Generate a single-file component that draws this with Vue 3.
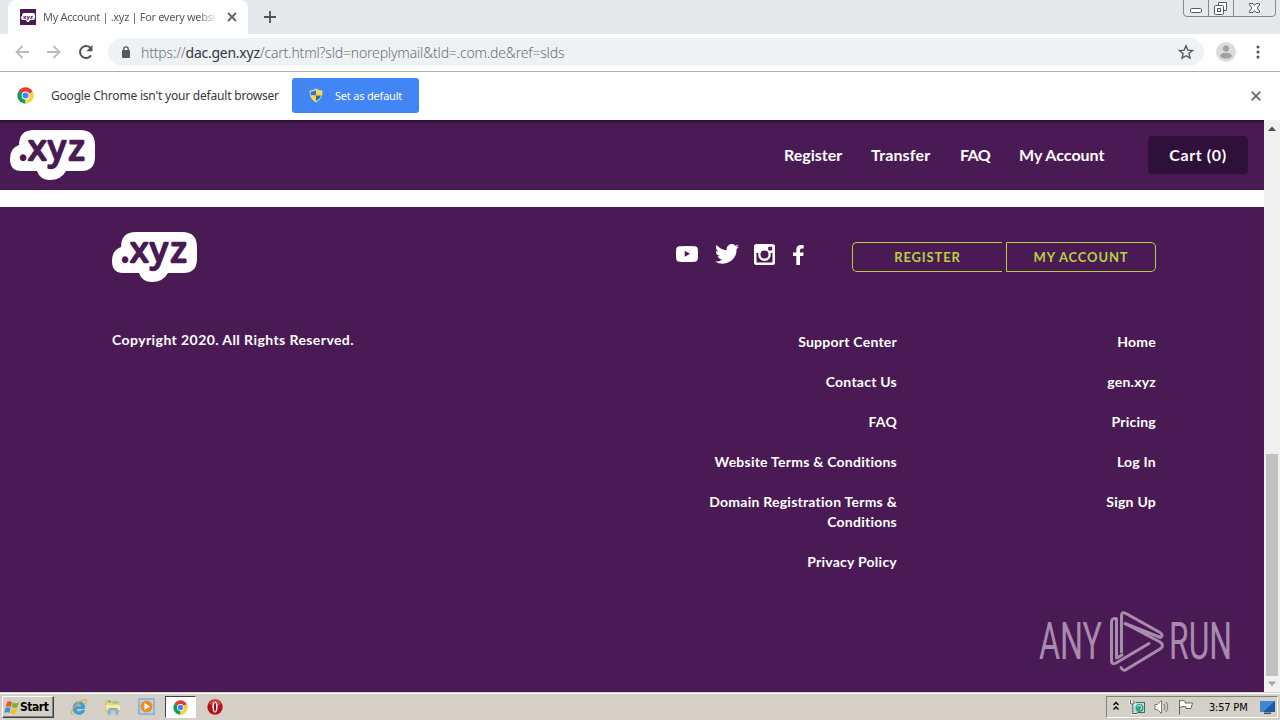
<script setup>
import { ref } from 'vue'

const navLinks = ref([
  { label: 'Register', cls: 'nav-register' },
  { label: 'Transfer', cls: 'nav-transfer' },
  { label: 'FAQ', cls: 'nav-faq' },
  { label: 'My Account', cls: 'nav-account' }
])

const supportLinks = ref([
  'Support Center',
  'Contact Us',
  'FAQ',
  'Website Terms & Conditions',
  'Domain Registration Terms & Conditions',
  'Privacy Policy'
])

const siteLinks = ref(['Home', 'gen.xyz', 'Pricing', 'Log In', 'Sign Up'])
</script>

<template>
  <div class="desktop">
    <!-- Shared symbols -->
    <svg class="defs" width="0" height="0">
      <symbol id="chrome" viewBox="0 0 48 48">
        <circle cx="24" cy="24" r="23" fill="#fff" />
        <path d="M24 24 4.1 12.5A23 23 0 0 1 43.9 12.5z" fill="#e33b2e" />
        <path d="M24 24 4.1 12.5A23 23 0 0 0 24 47z" fill="#109d58" />
        <path d="M24 24 43.9 12.5A23 23 0 0 1 24 47z" fill="#fccd48" />
        <path d="M24 13h20.2L24 24z" fill="#e33b2e" />
        <path d="M14.5 29.5 4.1 12.5 24 24z" fill="#109d58" />
        <path d="M33.5 29.5 24 47V24z" fill="#fccd48" />
        <circle cx="24" cy="24" r="11" fill="#fff" />
        <circle cx="24" cy="24" r="8.6" fill="#4285f4" />
      </symbol>
      <symbol id="xyz-logo" viewBox="0 0 86 50">
        <path d="M24 0H70Q85 0 85 15V27Q85 41 71 41H56Q51 50 40 50 30 50 27 41H11Q0 41 0 29 0 18 9 15 9 0 24 0z" fill="#fff" />
        <text x="8.5 18.300 38.300 58.500" y="30" font-family="Open Sans, sans-serif" font-size="34.500" font-weight="400" fill="#4a1a55" stroke="#4a1a55" stroke-width="2.400" stroke-linejoin="round">.xyz</text>
      </symbol>
    </svg>

    <header class="tab-strip">
      <div class="tab">
        <svg class="favicon" viewBox="0 0 16 16">
          <rect width="16" height="16" fill="#4a1a55" />
          <path d="M4 4h9q2 0 2 2v3q0 2-2 2h-3l-1 2H7L6 11H3q-2 0-2-2t1-2q0-3 2-3z" fill="#fff" />
          <text x="3" y="9.500" font-size="6" font-weight="700" font-family="Open Sans, sans-serif" fill="#4a1a55">xyz</text>
        </svg>
        <span class="tab-title">My Account | .xyz | For every websi</span>
        <svg class="tab-close" viewBox="0 0 10 10"><path d="M1 1l8 8M9 1L1 9" stroke="#5f6368" stroke-width="1.8" /></svg>
      </div>
      <svg class="new-tab" viewBox="0 0 12 12"><path d="M6 0v12M0 6h12" stroke="#505458" stroke-width="1.8" /></svg>
      <svg class="window-buttons" viewBox="0 0 94 18">
        <path d="M.5 0V13Q.5 16.500 4 16.500H89Q92.500 16.500 92.500 13V0M25.500 0V16M50.500 0V16" fill="none" stroke="#858a92" />
        <rect x="7.500" y="8.500" width="11" height="4" rx="1" fill="#fff" stroke="#555961" />
        <path d="M35.500 5V2.500H43.500V10.500H41" fill="#fff" stroke="#555961" />
        <rect x="31.500" y="5.500" width="9" height="9" rx="1" fill="#fff" stroke="#555961" />
        <rect x="34.500" y="8.500" width="3" height="3" fill="#fff" stroke="#555961" />
        <path d="M66.500 3.500H70L71.500 5.500 73 3.500H76.500V5L74 8 76.500 11V12.500H73L71.500 10.500 70 12.500H66.500V11L69 8 66.500 5z" fill="#fff" stroke="#555961" />
      </svg>
    </header>

    <div class="toolbar">
      <svg class="nav-icon back" viewBox="0 0 14 14"><path d="M14 7H1.500M7.500 1L1.500 7l6 6" fill="none" stroke="#b9bbbe" stroke-width="1.800" /></svg>
      <svg class="nav-icon forward" viewBox="0 0 14 14"><path d="M0 7h12.500M6.500 1l6 6-6 6" fill="none" stroke="#b9bbbe" stroke-width="1.800" /></svg>
      <svg class="nav-icon reload" viewBox="0 0 16 16"><path d="M13 11.400A6 6 0 1 1 12.300 3.800" fill="none" stroke="#4f5357" stroke-width="2" /><path d="M14.500 1V7.200H8.300z" fill="#4f5357" /></svg>
      <div class="omnibox">
        <svg class="lock" viewBox="0 0 10 12"><rect x="1" y="4" width="8" height="8" rx="1" fill="#55595e" /><path d="M2.800 5V3a2.200 2.200 0 0 1 4.400 0v2" fill="none" stroke="#55595e" stroke-width="1.300" /></svg>
        <span class="url">https://<b>dac.gen.xyz</b>/cart.html?sld=noreplymail&amp;tld=.com.de&amp;ref=slds</span>
        <svg class="star" viewBox="0 0 16 16"><path d="M8 1.800l1.800 4.300 4.700.4-3.600 3 1.100 4.600L8 11.700l-4 2.400 1.100-4.600-3.600-3 4.700-.4z" fill="none" stroke="#55595e" stroke-width="1.400" /></svg>
      </div>
      <svg class="avatar" viewBox="0 0 20 20"><circle cx="10" cy="10" r="10" fill="#dcdcde" /><circle cx="10" cy="6.500" r="3.100" fill="#a1a1a3" /><ellipse cx="10" cy="13.700" rx="5.800" ry="3" fill="#a1a1a3" /></svg>
      <svg class="menu-dots" viewBox="0 0 4 14"><circle cx="2" cy="2" r="1.500" /><circle cx="2" cy="7" r="1.500" /><circle cx="2" cy="12" r="1.500" /></svg>
    </div>

    <div class="infobar">
      <svg class="chrome-icon"><use href="#chrome" /></svg>
      <span class="info-text">Google Chrome isn't your default browser</span>
      <button class="default-btn">
        <svg viewBox="0 0 14 15">
          <path d="M7 .5Q10 2.500 13.500 2.500 14 11 7 14.500 0 11 .5 2.500 4 2.500 7 .5z" fill="#e8e8dc" stroke="#8a8f80" stroke-width=".5" />
          <path d="M7 2v5.500H2q-.5-2-.3-4Q4.500 3.500 7 2z" fill="#2f78c8" />
          <path d="M7 2v5.500h5q.5-2 .3-4Q9.500 3.500 7 2z" fill="#ffd428" />
          <path d="M7 13V7.500H2Q3 11 7 13z" fill="#ffd428" />
          <path d="M7 13V7.500h5Q11 11 7 13z" fill="#286bb5" />
        </svg>
        <span>Set as default</span>
      </button>
      <svg class="info-close" viewBox="0 0 10 10"><path d="M.7.7l8.600 8.600M9.300.7L.7 9.300" stroke="#666a6e" stroke-width="1.900" /></svg>
    </div>

    <div class="viewport">
      <main class="page">
        <nav class="site-nav">
          <svg class="logo"><use href="#xyz-logo" /></svg>
          <div class="nav-links">
            <a v-for="link in navLinks" :key="link.label" :class="link.cls">{{ link.label }}</a>
          </div>
          <a class="cart"><span>Cart (0)</span></a>
        </nav>

        <footer class="site-footer">
          <div class="footer-top">
            <svg class="logo"><use href="#xyz-logo" /></svg>
            <div class="social">
              <svg class="youtube" viewBox="0 0 22 16"><path fill-rule="evenodd" d="M3 .3Q11-.3 19 .3 21.500.5 21.800 3 22.200 8 21.800 13 21.500 15.500 19 15.700 11 16.300 3 15.700.5 15.500.2 13-.2 8 .2 3 .5.500 3 .3zM8.700 4.800v6L14 7.800z" fill="#fff" /></svg>
              <svg class="twitter" viewBox="0 0 24 20"><path d="M24 2.400a10 10 0 0 1-2.800.8A5 5 0 0 0 23.300.500a10 10 0 0 1-3.100 1.200 4.900 4.900 0 0 0-8.400 4.500A14 14 0 0 1 1.700 1a4.900 4.900 0 0 0 1.500 6.600 5 5 0 0 1-2.200-.6 4.900 4.900 0 0 0 3.900 4.900 5 5 0 0 1-2.200.1 4.900 4.900 0 0 0 4.600 3.400A9.900 9.900 0 0 1 0 17.500 14 14 0 0 0 21.500 5 10 10 0 0 0 24 2.400z" fill="#fff" /></svg>
              <svg class="instagram" viewBox="0 0 21 21"><path fill-rule="evenodd" d="M2.500 0h16Q21 0 21 2.500v16Q21 21 18.500 21h-16Q0 21 0 18.500v-16Q0 0 2.500 0zM15 2.800q-.8 0-.8.8v2.200q0 .8.800.8h2.400q.8 0 .8-.8V3.600q0-.8-.8-.8zM2.500 9v8.500q0 1 1 1h14q1 0 1-1V9h-2.100A6.200 6.200 0 1 1 4.600 9zM10.500 6.500a4 4 0 1 0 0 8 4 4 0 0 0 0-8z" fill="#fff" /></svg>
              <svg class="facebook" viewBox="0 0 11 20"><path d="M7 20v-9h3.200l.5-3.600H7V5.200q0-1.700 1.700-1.700h2V.2Q10 0 8 0 3.300 0 3.300 4.800v2.600H0V11h3.300v9z" fill="#fff" /></svg>
            </div>
            <div class="footer-buttons">
              <a class="outline-btn left">REGISTER</a>
              <a class="outline-btn right">MY ACCOUNT</a>
            </div>
          </div>
          <div class="footer-body">
            <p class="copyright">Copyright 2020. All Rights Reserved.</p>
            <ul class="link-col support">
              <li v-for="item in supportLinks" :key="item">{{ item }}</li>
            </ul>
            <ul class="link-col site">
              <li v-for="item in siteLinks" :key="item">{{ item }}</li>
            </ul>
          </div>
        </footer>
      </main>

      <div class="scrollbar">
        <svg class="arrow" viewBox="0 0 16 17"><path d="M4 11l4-4.500 4 4.500z" fill="#505050" /></svg>
        <div class="track"><div class="thumb"></div></div>
        <svg class="arrow down" viewBox="0 0 16 16"><path d="M4 5.500l4 4.500 4-4.500z" fill="#a3a3a3" /></svg>
      </div>
    </div>

    <!-- Watermark over the page -->
    <svg class="watermark" viewBox="0 0 200 64">
      <g fill="#a78cac" font-family="Roboto, sans-serif" font-size="52" font-weight="400">
        <text x="1" y="50" textLength="63" lengthAdjust="spacingAndGlyphs">ANY</text>
        <text x="131" y="50" textLength="63" lengthAdjust="spacingAndGlyphs">RUN</text>
      </g>
      <g fill="none" stroke="#a78cac" stroke-width="3" stroke-linejoin="round" stroke-linecap="round">
        <path d="M78 9.500Q73.500 9 73.500 13V52Q74 56 78 54L111 34.500" />
        <path d="M83.500 43V7Q83.500 2 88 4.500L122 23.500Q126 26.500 122.500 28.500L87 14.500" />
        <path d="M83 58.500Q85 63 89 60L122 40Q127 36.500 122 33L88 15M78.500 10V49L84 46" />
      </g>
    </svg>

    <div class="taskbar">
      <button class="start">
        <svg viewBox="0 0 16 15">
          <path d="M3 2Q5.500.5 8 2L6.800 7Q4.500 5.500 1.800 7z" fill="#e8582c" />
          <path d="M8.800 2.300Q11.500 4 14.800 2.300L13.500 7.300Q10.500 8.800 7.700 7.300z" fill="#7db52f" />
          <path d="M1.500 8Q4 6.600 6.500 8L5.300 13Q3 11.500 .2 13z" fill="#3f8fd8" />
          <path d="M7.400 8.400Q10 10 13.200 8.400L12 13.300Q9 14.800 6.200 13.300z" fill="#f6bf26" />
        </svg>
        <span>Start</span>
      </button>
      <div class="quick">
        <svg class="ie" viewBox="0 0 18 18">
          <path d="M14.800 10.700H6.200Q6.700 13.500 9.200 13.500q2 0 2.800-1.300h2.800Q13.300 16.500 9 16.500 3 16 3 10 3.500 4 9.200 3.700q6 .3 5.600 7zM6.200 8.300H11.800Q11.300 6.200 9 6.200T6.200 8.300z" fill="#36a3df" stroke="#2b7fc0" stroke-width=".4" />
          <path d="M3 16.500Q-1 16 4 9.500 9 3 14.500 1.700 18 1.500 15 6" fill="none" stroke="#d9b040" stroke-width="1.200" />
        </svg>
        <svg class="explorer" viewBox="0 0 18 18">
          <path d="M2 3h5l1 1.500h7V14H2z" fill="#eed37b" stroke="#c8a84c" stroke-width=".6" />
          <path d="M4 2h3v3H4zM9 3.500h5v2H9z" fill="#8dc27b" />
          <path d="M2 7h14v5H2z" fill="#f8e8a6" />
          <path d="M4 17v-5q0-2 2-2h6q2 0 2 2v5h-2.500v-4.500h-5V17z" fill="#70b6df" />
        </svg>
        <svg class="player" viewBox="0 0 18 18">
          <rect x="1" y="1" width="15" height="15" fill="#b8d7ef" stroke="#5b9bcf" />
          <circle cx="8.500" cy="8.500" r="6" fill="#f28a1d" />
          <path d="M6.500 5v7l5.500-3.500z" fill="#fff" />
        </svg>
        <div class="task-active"><svg><use href="#chrome" /></svg></div>
        <svg class="opera" viewBox="0 0 18 18">
          <circle cx="9" cy="9" r="7.700" fill="#b51217" />
          <path d="M3 6Q5 2 9 2t6 4Q11 9 3 6z" fill="#d94747" />
          <ellipse cx="9" cy="9" rx="2.600" ry="5.500" fill="#fff" />
          <ellipse cx="9" cy="9" rx="1" ry="4.600" fill="#8b0d10" />
        </svg>
      </div>
      <div class="tray">
        <svg class="chevrons" viewBox="0 0 8 10"><path d="M1.500 4l2.500-2.500L6.500 4M1.500 8.500L4 6l2.500 2.500" fill="none" stroke="#000" stroke-width="1.400" /></svg>
        <svg class="network" viewBox="0 0 17 16">
          <rect x="4.500" y="3.500" width="11" height="10" fill="#b9e0dd" stroke="#3c6e70" />
          <circle cx="10.500" cy="9" r="4" fill="#38a08c" />
          <path d="M8 8q2-3 4-1t-1 4" fill="none" stroke="#c6f0d0" />
          <path d="M1.500 1v4h3.500V1M3.200 5v9.500H8" fill="none" stroke="#fff" stroke-width="2.600" />
          <path d="M1.500 1v4h3.500V1M3.200 5v9.500H8" fill="none" stroke="#555" stroke-width="1" />
        </svg>
        <svg class="volume" viewBox="0 0 16 16">
          <path d="M1 5.500h2.500l4-4v13l-4-4H1z" fill="#fff" stroke="#777" />
          <path d="M10 5q2 3 0 6M12 3q3.500 5 0 10" fill="none" stroke="#777" stroke-width="1" />
        </svg>
        <svg class="flag" viewBox="0 0 16 16"><path d="M1.500 1v14.500M1.500 2q3-1.500 6 .5V4h7L13 9.500H8V8q-3-1.500-6 .5" fill="#fff" stroke="#666" /></svg>
        <span class="clock">3:57 PM</span>
        <svg class="show-desktop" viewBox="0 0 15 13">
          <rect width="15" height="11" fill="#1e58a6" />
          <path d="M0 0h15L3 11H0z" fill="#3f86d4" />
          <path d="M4 11.500h7v1.500H4z" fill="#44505e" />
        </svg>
      </div>
    </div>
  </div>
</template>

<style>
body { margin: 0; overflow: hidden; }
</style>

<style scoped>
.desktop {
  position: relative;
  display: flex;
  flex-direction: column;
  width: 1280px;
  height: 720px;
  overflow: hidden;
  background: #fff;
  font-family: "Noto Sans", sans-serif;
}
.desktop * { box-sizing: border-box; }
.defs { position: absolute; }
svg { display: block; flex: none; }

/* Tab strip */
.tab-strip { display: flex; align-items: flex-start; height: 34px; background: #e5e9ec; }
.tab { display: flex; align-items: center; width: 240px; height: 34px; margin-left: 8px; padding-left: 12px; background: #fff; border-radius: 8px 8px 0 0; }
.favicon { width: 16px; height: 16px; }
.tab-title { width: 176px; margin: -2px 0 0 7px; white-space: nowrap; font-size: 11px; letter-spacing: -0.330px; color: #55595e; mask-image: linear-gradient(90deg, #000 88%, transparent); }
.tab-close { width: 10px; height: 10px; margin-left: 8px; }
.new-tab { width: 12px; height: 12px; margin: 11px 0 0 16px; }
.window-buttons { width: 94px; height: 18px; margin-left: auto; margin-right: 3px; }

/* Toolbar */
.toolbar { display: flex; align-items: center; height: 38px; padding: 0 0 1px 15px; border-bottom: 1px solid #aeb1b4; }
.nav-icon { width: 14px; height: 14px; }
.forward { margin-left: 18px; }
.reload { width: 16px; height: 16px; margin-left: 17px; }
.omnibox { display: flex; align-items: center; width: 1096px; height: 28px; margin-left: 14px; padding: 0 10px 0 13px; border-radius: 14px; background: #eff2f5; }
.lock { width: 10px; height: 12px; }
.url { margin-left: 10px; white-space: nowrap; font-size: 14px; font-weight: 300; letter-spacing: -0.180px; color: #6b6f74; }
.url b { font-weight: 400; letter-spacing: -0.250px; color: #33363a; }
.star { width: 16px; height: 16px; margin-left: auto; }
.avatar { width: 20px; height: 20px; margin-left: 12px; }
.menu-dots { width: 4px; height: 14px; margin-left: 20px; fill: #505458; }

/* Infobar */
.infobar { display: flex; align-items: center; height: 48px; padding: 0 19px 1px 17px; }
.chrome-icon { width: 17px; height: 17px; }
.info-text { width: 229px; margin-left: 17px; white-space: nowrap; font-size: 12px; letter-spacing: -0.200px; color: #35383b; }
.default-btn { display: flex; align-items: center; width: 127px; height: 35px; margin-left: 12px; padding: 0 0 0 17px; border: 0; border-radius: 3px; background: #4285f4; color: #fff; font-family: inherit; font-size: 11px; letter-spacing: -0.200px; white-space: nowrap; }
.default-btn svg { width: 14px; height: 15px; margin-right: 12px; }
.info-close { width: 10px; height: 10px; margin: 1px 0 0 auto; }

/* Page */
.viewport { display: flex; height: 572px; }
.page { display: flex; flex-direction: column; width: 1264px; background: #fff; color: #fff; font-family: Lato, sans-serif; }
.site-nav { display: flex; align-items: center; height: 70px; padding: 0 16px 0 10px; background: linear-gradient(#2e1036, #4a1a55 4px); }
.logo { width: 86px; height: 50px; }
.nav-links { display: flex; width: 321px; margin: -2px 0 0 688px; font-size: 16px; font-weight: 700; white-space: nowrap; }
.nav-register { width: 87px; }
.nav-transfer { width: 89px; letter-spacing: 0.150px; }
.nav-faq { width: 59px; letter-spacing: -0.500px; }
.cart { display: flex; align-items: center; justify-content: center; width: 100px; height: 38px; margin-left: auto; padding-bottom: 2px; border-radius: 4px; background: #2f103a; font-size: 16px; font-weight: 700; letter-spacing: 0.600px; }
.site-footer { height: 485px; margin-top: 17px; padding: 25px 108px 0 112px; background: #4a1a55; }
.footer-top { display: flex; height: 97px; }
.social { display: flex; align-items: center; width: 128px; height: 24px; margin: 10px 0 0 478px; }
.youtube { width: 22px; height: 16px; }
.twitter { width: 24px; height: 20px; margin-left: 17px; }
.instagram { width: 21px; height: 21px; margin-left: 15px; }
.facebook { width: 11px; height: 20px; margin: 1px 0 0 18px; }
.footer-buttons { display: flex; gap: 4px; margin: 10px 0 0 48px; }
.outline-btn { width: 150px; height: 30px; border: 1px solid #b9d13c; color: #b9d13c; font-size: 13px; font-weight: 700; line-height: 28px; letter-spacing: 0.850px; text-align: center; }
.outline-btn.left { border-right: 0; border-radius: 5px 0 0 5px; }
.outline-btn.right { border-radius: 0 5px 5px 0; }
.footer-body { display: flex; font-size: 14px; font-weight: 700; line-height: 20px; }
.copyright { width: 380px; margin: 1px 0 0; white-space: nowrap; letter-spacing: 0.420px; }
.link-col { margin: 3px 0 0; padding: 0; list-style: none; text-align: right; letter-spacing: 0.240px; }
.link-col li { margin-bottom: 20px; }
.support { width: 200px; margin-left: 205px; }
.site { width: 100px; margin-left: 159px; }

.scrollbar { display: flex; flex-direction: column; width: 16px; background: #f1f1f1; }
.arrow { width: 16px; height: 17px; }
.arrow.down { height: 16px; }
.track { display: flex; flex: 1; flex-direction: column; justify-content: flex-end; padding: 0 2px 0 2px; }
.thumb { height: 222px; background: #c1c1c1; }

.watermark { position: absolute; left: 1038px; top: 609px; width: 200px; height: 64px; }

/* Taskbar */
.taskbar { display: flex; align-items: center; height: 28px; padding: 1px 2px 0 2px; border-top: 1px solid #d4d0c8; box-shadow: inset 0 1px #fff; background: #d4d0c8; }
.start { display: flex; align-items: center; width: 52px; height: 22px; padding: 0 0 0 1px; border: 1px solid; border-color: #fff #404040 #404040 #fff; background: #d4d0c8; box-shadow: inset -1px -1px #808080; font-family: "DejaVu Sans Condensed", "DejaVu Sans", sans-serif; font-size: 12px; font-weight: 700; color: #000; }
.start svg { width: 16px; height: 15px; }
.start span { letter-spacing: -0.450px; }
.quick { display: flex; align-items: center; margin-left: 16px; }
.ie, .explorer, .player, .opera { width: 18px; height: 18px; }
.explorer, .player { margin-left: 16px; }
.task-active { display: flex; align-items: center; justify-content: center; width: 31px; height: 22px; margin-left: 9px; border: 1px solid; border-color: #404040 #fff #fff #404040; background: #fff; }
.task-active svg { width: 15px; height: 15px; }
.opera { margin-left: 10px; }
.tray { display: flex; align-items: center; width: 172px; height: 22px; margin-left: auto; padding: 0 0 0 5px; border: 1px solid; border-color: #808080 #fff #fff #808080; }
.chevrons { width: 8px; height: 10px; margin-top: -3px; }
.network { width: 17px; height: 16px; margin-left: 9px; }
.volume { width: 16px; height: 16px; margin-left: 8px; }
.flag { width: 16px; height: 16px; margin-left: 8px; }
.clock { width: 40px; margin-left: 15px; white-space: nowrap; font-family: "DejaVu Sans Condensed", sans-serif; font-size: 11px; letter-spacing: -0.200px; color: #000; }
.show-desktop { width: 15px; height: 13px; margin-left: 11px; }
</style>
